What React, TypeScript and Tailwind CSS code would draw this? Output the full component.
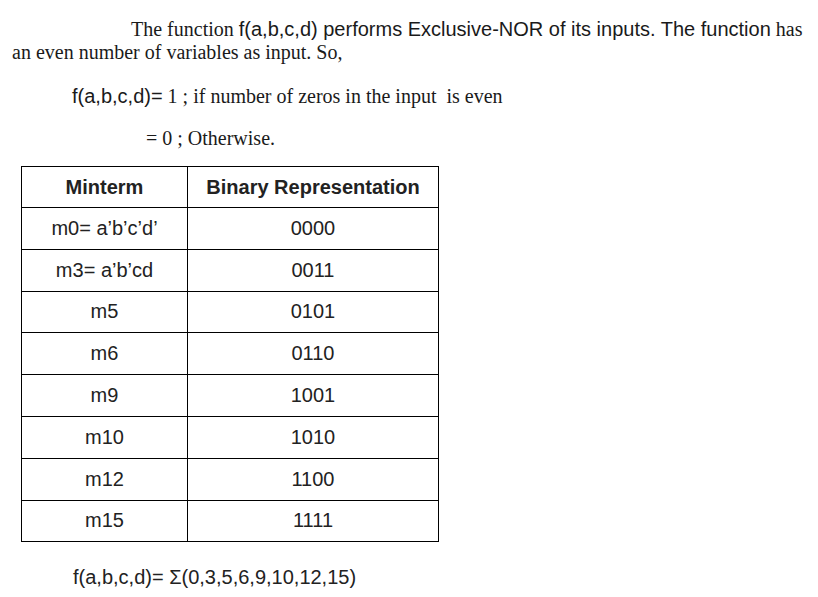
import React from "react";

const rows = [
  ["m0= a’b’c’d’", "0000"],
  ["m3= a’b’cd", "0011"],
  ["m5", "0101"],
  ["m6", "0110"],
  ["m9", "1001"],
  ["m10", "1010"],
  ["m12", "1100"],
  ["m15", "1111"],
];

const sans = "font-['Liberation_Sans',Arial,sans-serif]";

export default function App() {
  return (
    <div className="w-[818px] h-[597px] bg-white overflow-hidden font-['Liberation_Serif','Times_New_Roman',serif] text-[20px] leading-[23px] text-[#1a1a1a]">
      <p className="pl-3 pt-[18px] indent-[119px] whitespace-nowrap">
        The function <span className={sans}>f(a,b,c,d) performs Exclusive-NOR of its inputs. The function</span> has
        <br />
        an even number of variables as input. So,
      </p>

      <p className="pl-[72px] mt-[21px] whitespace-pre">
        <span className={sans}>f(a,b,c,d)=</span> 1 ; if number of zeros in the input  is even
      </p>

      <p className="pl-[146px] mt-[19px]">= 0 ; Otherwise.</p>

      <table className={`ml-[21px] mt-[16px] w-[418px] border-collapse ${sans} text-[#222]`}>
        <thead>
          <tr className="h-[41px]">
            <th className="w-[166px] border border-black font-bold">Minterm</th>
            <th className="border border-black font-bold">Binary Representation</th>
          </tr>
        </thead>
        <tbody>
          {rows.map(([m, b]) => (
            <tr key={m} className="h-[41.8px]">
              <td className="border border-black text-center">{m}</td>
              <td className="border border-black text-center">{b}</td>
            </tr>
          ))}
        </tbody>
      </table>

      <p className={`pl-[73px] mt-[24px] ${sans} text-[#222]`}>f(a,b,c,d)= Σ(0,3,5,6,9,10,12,15)</p>
    </div>
  );
}
